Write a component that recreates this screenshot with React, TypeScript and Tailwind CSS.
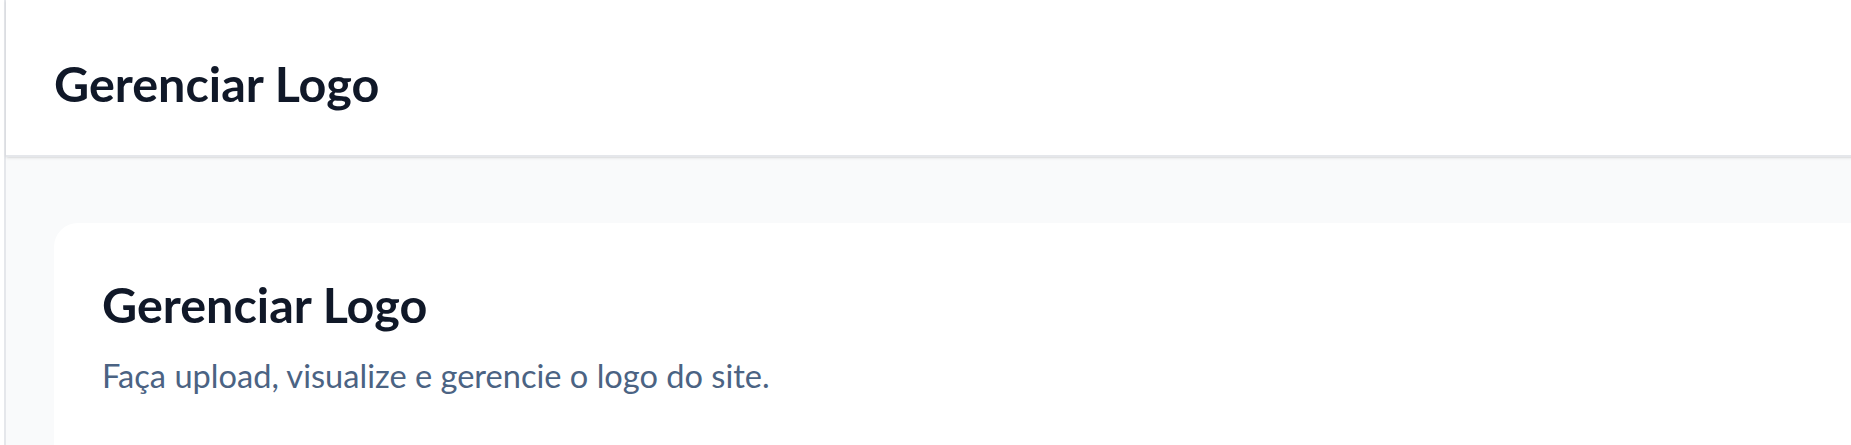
import React from "react";

const App: React.FC = () => {
  return (
    <div className="flex h-[445px] w-[1851px] overflow-hidden bg-white font-['Lato',sans-serif]">
      <div className="w-1 shrink-0 bg-white" />
      <div className="flex w-[1960px] shrink-0 flex-col border-l-2 border-gray-200 bg-gray-50">
        <header className="h-[157px] shrink-0 border-b-2 border-gray-200 bg-white px-12 pt-[59px] shadow-sm">
          <h1 className="text-[48.5px] leading-none font-bold text-gray-900">Gerenciar Logo</h1>
        </header>
        <main className="flex-1 pt-[66px] pl-12">
          <div className="h-[400px] rounded-3xl bg-white px-12 pt-[57px]">
            <h2 className="text-[48.5px] leading-none font-bold text-gray-900">Gerenciar Logo</h2>
            <p className="mt-[31px] text-[32.6px] leading-none text-[#4b6383]">Faça upload, visualize e gerencie o logo do site.</p>
          </div>
        </main>
      </div>
    </div>
  );
};

export default App;
